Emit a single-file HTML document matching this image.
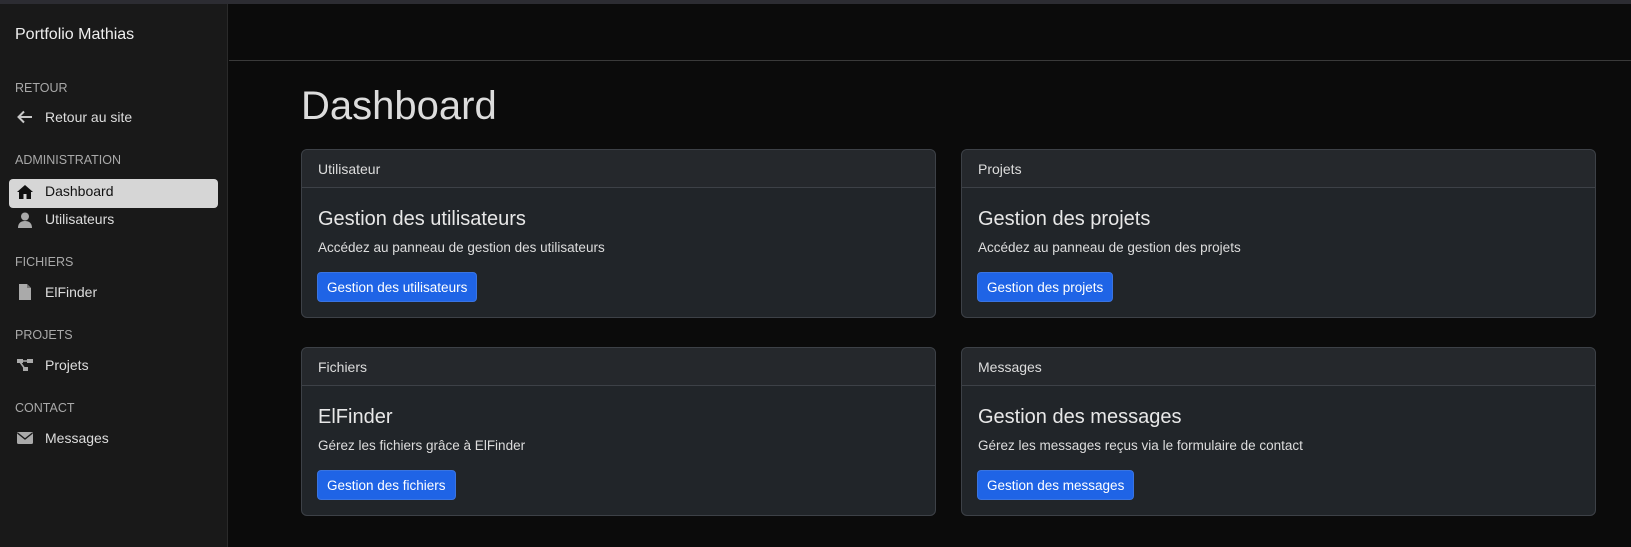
<!DOCTYPE html>
<html><head><meta charset="utf-8"><style>
*{box-sizing:border-box;margin:0;padding:0}
body{width:1631px;height:547px;background:#0b0b0b;font-family:"Liberation Sans",sans-serif;color:#dee2e6;position:relative;overflow:hidden}
.strip{position:absolute;left:0;top:0;width:1631px;height:4px;background:#2c2c32}
.side{position:absolute;left:0;top:4px;width:228px;height:543px;background:#191919;border-right:1px solid #2a2a2a}
.top{position:absolute;left:229px;top:4px;right:0;height:57px;border-bottom:1px solid #3a3a3a}
.t{position:absolute;white-space:nowrap}
.brand{left:15px;font-size:16px;color:#eee}
.sec{left:15px;font-size:12.5px;color:#a9a9a9}
.it{left:45px;font-size:14px;color:#ddd}
.ic{position:absolute;left:16px;width:18px;height:18px}
.act{position:absolute;left:9px;top:175px;width:209px;height:29px;background:#d6d6d6;border-radius:4px}
h1{position:absolute;left:301px;top:84px;font-size:40px;font-weight:400;color:#dcdcdc}
.card{position:absolute;width:635px;height:169px;background:#212529;border:1px solid #3d4147;border-radius:6px}
.hd{height:38px;border-bottom:1px solid #3d4147;background:#25282c;border-radius:6px 6px 0 0;padding:11px 16px;font-size:14px;color:#ddd}
.ct{position:absolute;left:16px;top:58px;font-size:20px;color:#e8e8e8}
.ds{position:absolute;left:16px;top:90px;font-size:13.5px;color:#ddd}
.bt{position:absolute;left:15px;top:122px;height:30px;background:#1f64e6;border:1px solid #3a74e0;border-radius:4px;padding:7px 9px;font-size:13.5px;color:#fff}
</style></head><body>
<div class="strip"></div>
<div class="side">
<div class="t brand" style="top:22px">Portfolio Mathias</div>
<div class="t sec" style="top:77px">RETOUR</div>
<svg class="ic" style="top:104px" viewBox="0 0 18 18"><path d="M16 9H3M8 3.5 2.5 9 8 14.5" stroke="#c8c8c8" stroke-width="2" fill="none"/></svg>
<div class="t it" style="top:105px">Retour au site</div>
<div class="t sec" style="top:149px">ADMINISTRATION</div>
<div class="act"></div>
<svg class="ic" style="top:179px" viewBox="0 0 18 18"><path d="M9 2 1 9h2v7h4.5v-5h3v5H15V9h2z" fill="#111"/></svg>
<div class="t it" style="top:179px;color:#111">Dashboard</div>
<svg class="ic" style="top:207px" viewBox="0 0 18 18"><circle cx="9" cy="5.5" r="4" fill="#aaa"/><path d="M2 17c0-5 3-7 7-7s7 2 7 7z" fill="#aaa"/></svg>
<div class="t it" style="top:207px">Utilisateurs</div>
<div class="t sec" style="top:251px">FICHIERS</div>
<svg class="ic" style="top:279px" viewBox="0 0 18 18"><path d="M3 1h8l4 4v12H3z" fill="#aaa"/><path d="M11 1v4h4" fill="#777"/></svg>
<div class="t it" style="top:280px">ElFinder</div>
<div class="t sec" style="top:324px">PROJETS</div>
<svg class="ic" style="top:352px" viewBox="0 0 18 18"><rect x="1" y="3" width="6" height="4" fill="#aaa"/><rect x="11" y="3" width="6" height="4" fill="#aaa"/><rect x="7" y="11" width="5" height="4" fill="#aaa"/><path d="M6 5h6M4 6l5 7" stroke="#aaa" stroke-width="1.6"/></svg>
<div class="t it" style="top:353px">Projets</div>
<div class="t sec" style="top:397px">CONTACT</div>
<svg class="ic" style="top:425px" viewBox="0 0 18 18"><rect x="1" y="3" width="16" height="12" rx="1.5" fill="#aaa"/><path d="M1.5 4 9 10l7.5-6" stroke="#191919" stroke-width="1.4" fill="none"/></svg>
<div class="t it" style="top:426px">Messages</div>
</div>
<div class="top"></div>
<h1>Dashboard</h1>
<div class="card" style="left:301px;top:149px"><div class="hd">Utilisateur</div><div class="ct">Gestion des utilisateurs</div><div class="ds">Accédez au panneau de gestion des utilisateurs</div><div class="bt">Gestion des utilisateurs</div></div>
<div class="card" style="left:961px;top:149px"><div class="hd">Projets</div><div class="ct">Gestion des projets</div><div class="ds">Accédez au panneau de gestion des projets</div><div class="bt">Gestion des projets</div></div>
<div class="card" style="left:301px;top:347px"><div class="hd">Fichiers</div><div class="ct">ElFinder</div><div class="ds">Gérez les fichiers grâce à ElFinder</div><div class="bt">Gestion des fichiers</div></div>
<div class="card" style="left:961px;top:347px"><div class="hd">Messages</div><div class="ct">Gestion des messages</div><div class="ds">Gérez les messages reçus via le formulaire de contact</div><div class="bt">Gestion des messages</div></div>
</body></html>
